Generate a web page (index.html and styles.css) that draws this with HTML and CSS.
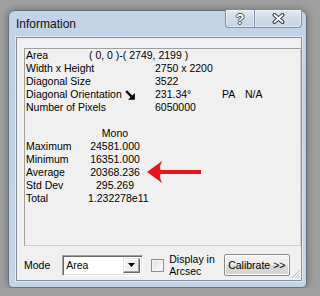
FILE: index.html
```html
<!DOCTYPE html>
<html lang="en">
<head>
    <meta charset="UTF-8">
    <title>Information</title>
    <link rel="stylesheet" href="styles.css">
</head>
<body>
    <div class="window">
        <div class="titlebar">
            <span class="title">Information</span>
            <div class="caption-btns">
                <span class="cbtn help">?</span>
                <span class="cbtn close">
                    <svg width="13" height="11" viewBox="0 0 13 11">
                        <path d="M2.5 2 L10.5 9 M10.5 2 L2.5 9" stroke="#3f444b" stroke-width="4" stroke-linecap="round"/>
                        <path d="M2.5 2 L10.5 9 M10.5 2 L2.5 9" stroke="#fff" stroke-width="1.8" stroke-linecap="round"/>
                    </svg>
                </span>
            </div>
        </div>
        <div class="client">
            <div class="panel">
                <div class="row"><span class="lbl lbl-short">Area</span><span>( 0, 0 )-( 2749, 2199 )</span></div>
                <div class="row"><span class="lbl">Width x Height</span><span>2750 x 2200</span></div>
                <div class="row"><span class="lbl">Diagonal Size</span><span>3522</span></div>
                <div class="row">
                    <span class="lbl">Diagonal Orientation
                        <svg class="dir" width="10" height="10" viewBox="0 0 10 10">
                            <path d="M1.2 1.2 L6.5 6.5" stroke="#000" stroke-width="2.4"/>
                            <path d="M9.8 3 L9.8 9.8 L3 9.8 Z" fill="#000"/>
                        </svg>
                    </span>
                    <span class="angle">231.34°</span><span class="pa">PA</span><span>N/A</span>
                </div>
                <div class="row"><span class="lbl">Number of Pixels</span><span>6050000</span></div>

                <div class="stats">
                    <span></span><span class="sv">Mono</span>
                    <span>Maximum</span><span class="sv">24581.000</span>
                    <span>Minimum</span><span class="sv">16351.000</span>
                    <span>Average</span><span class="sv">20368.236</span>
                    <span>Std Dev</span><span class="sv">295.269</span>
                    <span>Total</span><span class="sv">1.232278e11</span>
                </div>

                <svg class="pointer" width="58" height="28" viewBox="0 0 58 28">
                    <path d="M1 14 L16.5 2.7 Q13 8 14.5 12 L55 12 L55 16 L14.5 16 Q13 20 16.5 25.3 Z" fill="#e8161c"/>
                </svg>
            </div>

            <div class="controls">
                <span>Mode</span>
                <div class="combo">
                    <span class="combo-text">Area</span>
                    <span class="combo-btn">
                        <svg width="7" height="4" viewBox="0 0 7 4"><path d="M0 0 L7 0 L3.5 4 Z" fill="#000"/></svg>
                    </span>
                </div>
                <span class="check"></span>
                <span class="check-label">Display in<br>Arcsec</span>
                <span class="btn">Calibrate &gt;&gt;</span>
                <svg class="grip" width="10" height="10" viewBox="0 0 10 10">
                    <path d="M9 1 L1 9 M9 4 L4 9 M9 7 L7 9" stroke="#a9b3bf" stroke-width="1"/>
                    <path d="M10 2 L2 10 M10 5 L5 10 M10 8 L8 10" stroke="#fff" stroke-width="1"/>
                </svg>
            </div>
        </div>
    </div>
</body>
</html>
```

FILE: styles.css
```css
body {margin:0;background:#a0a0a0;font:10.5px/13px "Liberation Sans", Arial, sans-serif;color:#000;}

.window {width:299px;height:278px;box-sizing:border-box;margin:10px 0 0 8px;border:1px solid #65717f;border-radius:7px 7px 5px 5px;background:linear-gradient(#c3d4e7, #bdd0e4 30%, #c4d5e8);box-shadow:0 0 8px rgba(0,0,0,.35);display:flex;flex-direction:column;}

.titlebar {height:26px;display:flex;align-items:flex-start;padding-left:7px;}
.title {font-size:12px;line-height:13px;margin-top:7px;color:#111;}
.caption-btns {margin-left:auto;margin-right:4px;margin-top:-1px;display:flex;}
.cbtn {height:18px;box-sizing:border-box;border:1px solid #7f90a5;border-top:none;background:linear-gradient(#e3eaf3, #cfdbe9 50%, #c5d4e6);display:flex;align-items:center;justify-content:center;box-shadow:inset 0 0 0 1px rgba(255,255,255,.45);}
.help {width:29px;border-right:none;border-radius:0 0 0 4px;font:bold 14px/14px "Liberation Sans", Arial, sans-serif;color:#fafafa;text-shadow:1px 0 #4a4f56, -1px 0 #4a4f56, 0 1px #4a4f56, 0 -1px #4a4f56;}
.close {width:48px;border-radius:0 0 4px 0;}

.client {flex:1;margin:0 4px 6px 7px;border:1px solid #838f9d;background:#f0f0f0;display:flex;flex-direction:column;box-shadow:0 0 0 1px rgba(255,255,255,.5);}

.panel {position:relative;height:198px;box-sizing:border-box;margin:10px 0 0 7px;padding-left:1px;border:1px solid #a0a0a0;border-right-color:#cfcfcf;border-bottom-color:#cfcfcf;}
.row {display:flex;}
.lbl {width:129px;display:flex;align-items:center;}
.lbl-short {width:63px;}
.dir {margin-left:3px;}
.angle {width:67px;}
.pa {width:23px;}

.stats {display:grid;grid-template-columns:62px 54px;margin-top:13px;}
.sv {text-align:center;}

.pointer {position:absolute;left:121px;top:109px;}

.controls {display:flex;align-items:center;height:22px;margin-top:8px;padding-left:7px;white-space:nowrap;}
.controls > * {flex-shrink:0;}
.combo {width:81px;height:21px;box-sizing:border-box;margin-left:12px;padding:2px;border:1px solid;border-color:#a0a0a0 #fff #fff #a0a0a0;box-shadow:inset 1px 1px #696969, inset -1px -1px #e3e3e3;background:#fff;display:flex;align-items:stretch;}
.combo-text {flex:1;padding-left:1px;line-height:15px;}
.combo-btn {width:17px;box-sizing:border-box;background:#f0f0f0;border:1px solid;border-color:#e3e3e3 #696969 #696969 #e3e3e3;box-shadow:inset -1px -1px #a0a0a0, inset 1px 1px #fff;display:flex;align-items:center;justify-content:center;}
.check {width:13px;height:13px;box-sizing:border-box;margin-left:8px;border:1px solid #8e8f8f;background:linear-gradient(135deg, #dedede, #fdfdfd);box-shadow:inset 0 0 0 1px #f4f4f4;}
.check-label {margin-left:5px;line-height:12px;}
.btn {width:66px;height:22px;box-sizing:border-box;margin-left:9px;border:1px solid #8a8a8a;border-radius:2px;background:linear-gradient(#f4f4f4, #ebebeb 50%, #dcdcdc 51%, #d2d2d2);box-shadow:inset 0 0 0 1px #fbfbfb;display:flex;align-items:center;justify-content:center;}
.grip {margin-left:auto;align-self:flex-end;margin-bottom:-3px;}
```
